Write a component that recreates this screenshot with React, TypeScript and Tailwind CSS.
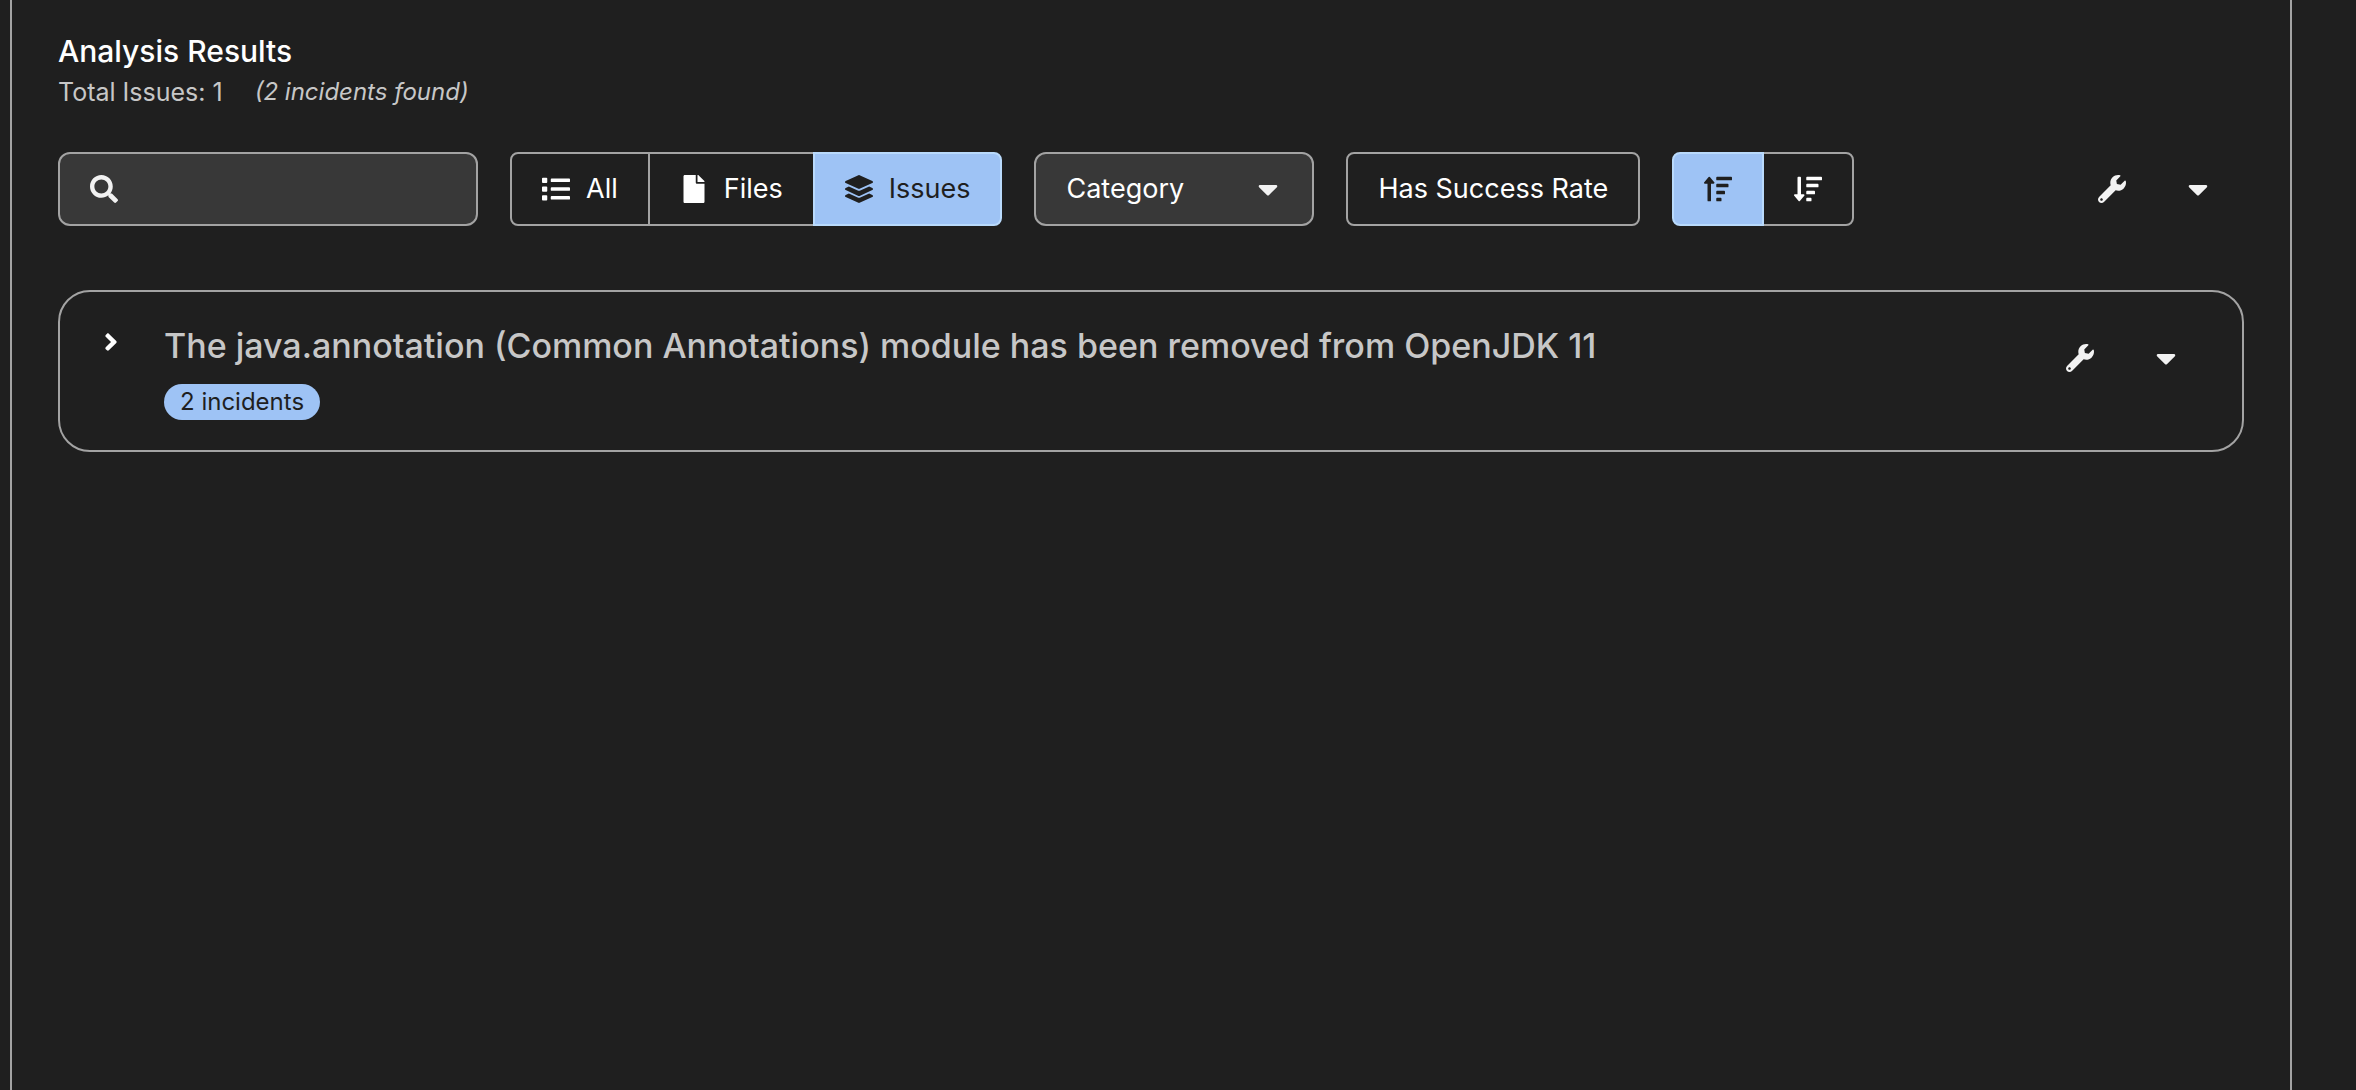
import { useState, type ReactNode } from "react";
import {
  FaAngleRight,
  FaCaretDown,
  FaFile,
  FaLayerGroup,
  FaList,
  FaSearch,
  FaSortAmountDown,
  FaSortAmountUp,
  FaWrench,
} from "react-icons/fa";

const selectedStyle = "relative border-[#b9dafc] bg-[#9ec3f5] text-[#1f1f1f]";
const idleStyle = "border-[#a3a3a3] text-white";

function ToggleItem({
  selected,
  onClick,
  label,
  children,
}: {
  selected: boolean;
  onClick: () => void;
  label?: string;
  children: ReactNode;
}) {
  return (
    <button
      type="button"
      aria-pressed={selected}
      aria-label={label}
      onClick={onClick}
      className={`-ml-0.5 flex h-full items-center gap-4 border-2 px-[30px] first:ml-0 first:rounded-l-lg last:rounded-r-lg ${
        selected ? selectedStyle : idleStyle
      }`}
    >
      {children}
    </button>
  );
}

function FixActions() {
  return (
    <div className="flex items-center text-[#f2f2f2]">
      <button type="button" aria-label="Get solution" className="p-4">
        <FaWrench size={28} />
      </button>
      <button type="button" aria-label="More solution options" className="ml-6 p-4">
        <FaCaretDown size={32} />
      </button>
    </div>
  );
}

export default function App() {
  const [view, setView] = useState("issues");
  const [order, setOrder] = useState("asc");
  const [successOnly, setSuccessOnly] = useState(false);

  return (
    <div className="flex min-h-screen bg-[#1f1f1f] pr-16 pl-2.5 font-['Inter',sans-serif] text-[27px] leading-9 text-white">
      <main className="min-w-0 grow border-x-2 border-[#a3a3a3] px-[46px] pt-[30px]">
        <h1 className="text-[30px] leading-[42px] font-medium">Analysis Results</h1>
        <div className="flex items-center gap-8 text-[#c7c7c7]">
          <p className="text-[25px] leading-10">Total Issues: 1</p>
          <p className="text-2xl leading-10 italic">(2 incidents found)</p>
        </div>

        <div className="mt-10 flex items-center gap-8">
          <label className="flex h-[74px] w-[420px] items-center gap-4 rounded-xl border-2 border-[#a3a3a3] bg-[#383838] px-[30px]">
            <FaSearch size={28} className="shrink-0 text-[#f2f2f2]" />
            <input type="search" aria-label="Search" className="min-w-0 grow bg-transparent outline-none" />
          </label>

          <div role="group" aria-label="Group by" className="flex h-[74px]">
            <ToggleItem selected={view === "all"} onClick={() => setView("all")}>
              <FaList size={28} />
              All
            </ToggleItem>
            <ToggleItem selected={view === "files"} onClick={() => setView("files")}>
              <span className="flex w-7 justify-center">
                <FaFile size={28} />
              </span>
              Files
            </ToggleItem>
            <ToggleItem selected={view === "issues"} onClick={() => setView("issues")}>
              <FaLayerGroup size={28} />
              Issues
            </ToggleItem>
          </div>

          <div className="relative h-[74px] w-[280px]">
            <select
              aria-label="Category"
              className="h-full w-full appearance-none rounded-xl border-2 border-[#a3a3a3] bg-[#383838] pr-16 pl-[30px]"
            >
              <option>Category</option>
            </select>
            <FaCaretDown
              size={32}
              className="pointer-events-none absolute inset-y-0 right-[30px] my-auto text-[#f2f2f2]"
            />
          </div>

          <button
            type="button"
            aria-pressed={successOnly}
            onClick={() => setSuccessOnly(!successOnly)}
            className={`h-[74px] rounded-lg border-2 px-[30px] ${successOnly ? selectedStyle : idleStyle}`}
          >
            Has Success Rate
          </button>

          <div role="group" aria-label="Sort order" className="flex h-[74px]">
            <ToggleItem label="Sort ascending" selected={order === "asc"} onClick={() => setOrder("asc")}>
              <FaSortAmountUp size={28} />
            </ToggleItem>
            <ToggleItem label="Sort descending" selected={order === "desc"} onClick={() => setOrder("desc")}>
              <FaSortAmountDown size={28} />
            </ToggleItem>
          </div>

          <div className="mr-3.5 ml-auto">
            <FixActions />
          </div>
        </div>

        <article className="mt-16 flex items-start rounded-[32px] border-2 border-[#a3a3a3] pt-[30px] pr-11 pb-[30px] pl-[30px]">
          <button type="button" aria-label="Show incidents" className="flex w-[42px] justify-center pt-1.5">
            <FaAngleRight size={28} />
          </button>
          <div className="ml-8 min-w-0 grow">
            <h2 className="text-[34px] leading-[48px] font-medium text-[#c7c7c7]">
              The java.annotation (Common Annotations) module has been removed from OpenJDK 11
            </h2>
            <span className="mt-3.5 block w-fit rounded-full bg-[#9ec3f5] px-4 text-2xl leading-9 text-[#1f1f1f]">
              2 incidents
            </span>
          </div>
          <div className="pt-1">
            <FixActions />
          </div>
        </article>
      </main>
    </div>
  );
}
